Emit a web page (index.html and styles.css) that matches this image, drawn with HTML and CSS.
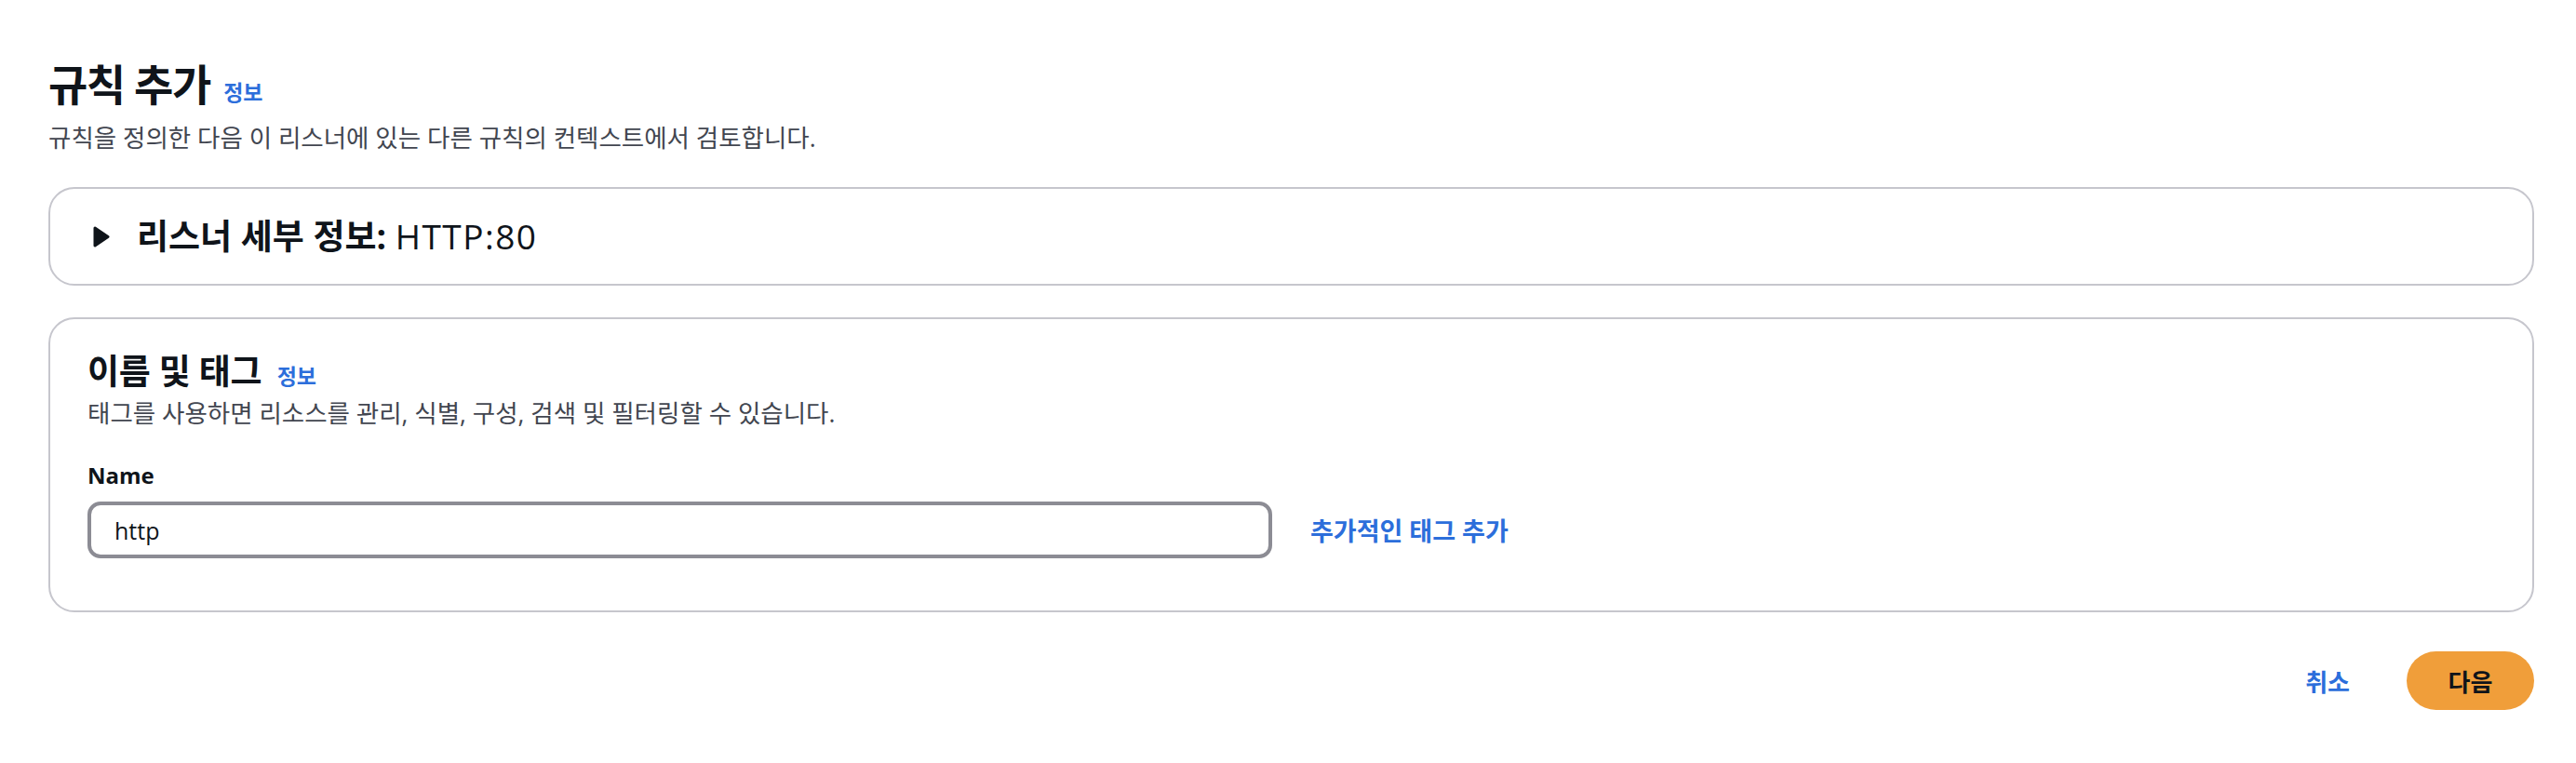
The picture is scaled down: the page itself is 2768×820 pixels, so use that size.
FILE: index.html
```html
<!DOCTYPE html>
<html lang="ko">
<head>
<meta charset="utf-8">
<title>규칙 추가</title>
<link rel="stylesheet" href="styles.css">
</head>
<body>
<main class="page">
  <header class="page-header">
    <h1 class="title">규칙 추가 <a class="info" href="#">정보</a></h1>
    <p class="desc">규칙을 정의한 다음 이 리스너에 있는 다른 규칙의 컨텍스트에서 검토합니다.</p>
  </header>

  <section class="card card-collapsed">
    <svg class="caret" width="18" height="23" viewBox="0 0 18 23" aria-hidden="true">
      <polygon points="2,2 16,11.5 2,21" fill="#0f141a" stroke="#0f141a" stroke-width="3" stroke-linejoin="round"/>
    </svg>
    <h2 class="card-title"><b>리스너 세부 정보:</b> <span class="latin">HTTP:80</span></h2>
  </section>

  <section class="card card-form">
    <h2 class="section-title">이름 및 태그 <a class="info" href="#">정보</a></h2>
    <p class="desc">태그를 사용하면 리소스를 관리, 식별, 구성, 검색 및 필터링할 수 있습니다.</p>
    <label class="label" for="name">Name</label>
    <div class="field-row">
      <div class="input" id="name">http</div>
      <a class="add-tag" href="#">추가적인 태그 추가</a>
    </div>
  </section>

  <footer class="actions">
    <a class="btn-link" href="#">취소</a>
    <button class="btn-primary" type="button">다음</button>
  </footer>
</main>
</body>
</html>
```

FILE: styles.css
```css
html, body {
  margin: 0;
  padding: 0;
  background: #ffffff;
}

body {
  font-family: "Open Sans", "Noto Sans CJK KR", sans-serif;
  color: #0f141a;
}

a {
  text-decoration: none;
}

.page {
  display: flex;
  flex-direction: column;
  padding: 62px 45px 0 52px;
}

.page-header {
  display: flex;
  flex-direction: column;
  gap: 12px;
}

.title {
  margin: 0;
  font-size: 46px;
  line-height: 56px;
  font-weight: 700;
  letter-spacing: -1.5px;
}

.info {
  color: #2c6edb;
  font-size: 23px;
  line-height: 1;
  font-weight: 700;
  letter-spacing: 0;
  margin-left: 4px;
}

.desc {
  margin: 0;
  font-size: 26.5px;
  line-height: 36px;
  color: #424650;
}

.card {
  border: 2px solid #c6c6cd;
  border-radius: 28px;
  background: #ffffff;
}

.card-collapsed {
  margin-top: 35px;
  height: 102px;
  display: flex;
  align-items: center;
  padding-left: 46px;
  gap: 29px;
}

.caret {
  display: block;
  flex: none;
}

.card-title {
  margin: 0;
  font-size: 37px;
  line-height: 44px;
  font-weight: 400;
  letter-spacing: 0;
}

.card-title b {
  font-weight: 700;
}

.card-title .latin {
  letter-spacing: 1.5px;
}

.card-form {
  margin-top: 34px;
  padding: 34px 40px 56px 40px;
  display: flex;
  flex-direction: column;
}

.section-title {
  margin: 0;
  font-size: 37px;
  line-height: 44px;
  font-weight: 700;
  letter-spacing: -0.3px;
}

.section-title .info {
  margin-left: 7px;
}

.card-form .desc {
  margin-top: 5px;
}

.label {
  margin-top: 32px;
  font-size: 24px;
  line-height: 34px;
  font-weight: 700;
}

.field-row {
  margin-top: 11px;
  display: flex;
  align-items: center;
  gap: 41px;
}

.input {
  box-sizing: border-box;
  width: 1273px;
  height: 61px;
  border: 4px solid #8c8c94;
  border-radius: 14px;
  padding: 0 25px;
  display: flex;
  align-items: center;
  font-size: 25px;
  color: #0f141a;
}

.add-tag {
  color: #2c6edb;
  font-size: 27px;
  font-weight: 700;
}

.actions {
  margin-top: 42px;
  display: flex;
  justify-content: flex-end;
  align-items: center;
  gap: 61px;
}

.btn-link {
  color: #2c6edb;
  font-size: 26px;
  font-weight: 700;
}

.btn-primary {
  box-sizing: border-box;
  height: 63px;
  width: 137px;
  border: none;
  border-radius: 32px;
  background: #f09e3a;
  color: #0f141a;
  font-family: "Open Sans", "Noto Sans CJK KR", sans-serif;
  font-size: 26px;
  font-weight: 700;
  padding: 0;
}
```
